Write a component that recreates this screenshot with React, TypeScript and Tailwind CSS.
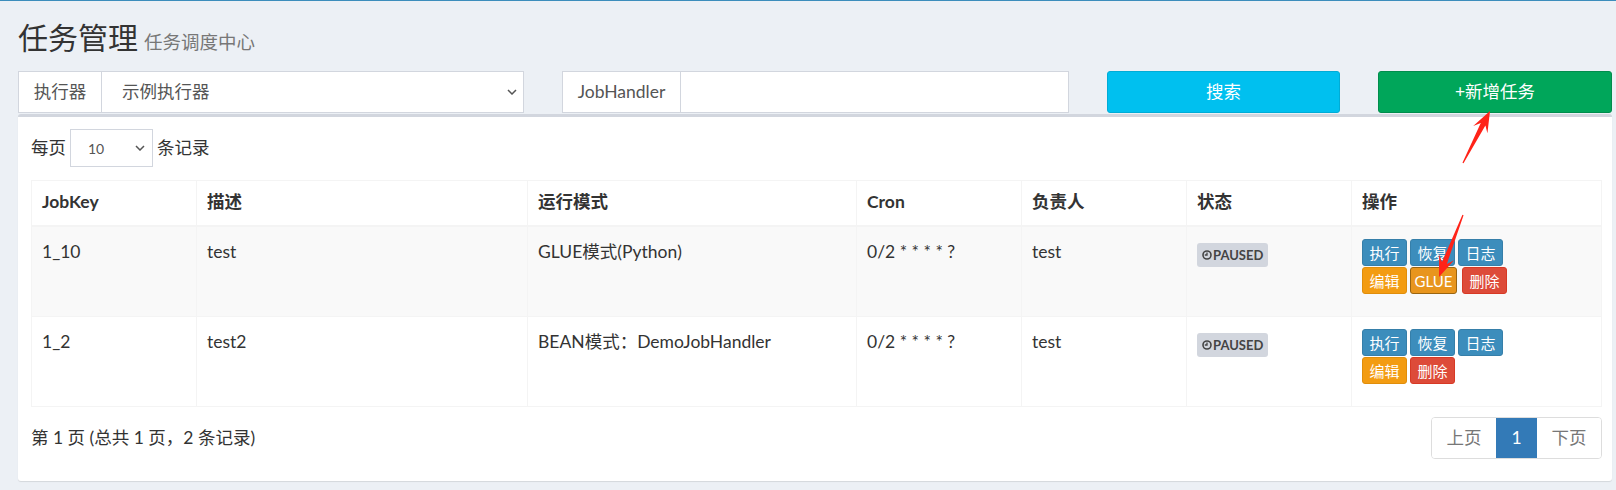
import React from "react";

interface Job {
	key: string;
	desc: string;
	mode: string;
	cron: string;
	owner: string;
	glue: boolean;
}

const jobs: Job[] = [
	{ key: "1_10", desc: "test", mode: "GLUE模式(Python)", cron: "0/2 * * * * ?", owner: "test", glue: true },
	{ key: "1_2", desc: "test2", mode: "BEAN模式：DemoJobHandler", cron: "0/2 * * * * ?", owner: "test", glue: false },
];

const headers = ["JobKey", "描述", "运行模式", "Cron", "负责人", "状态", "操作"];
const cols = "grid grid-cols-[165px_331px_329px_165px_165px_165px_250px]";

function Chevron({ className }: { className?: string }) {
	return (
		<svg className={className} width="10" height="6" viewBox="0 0 10 6" fill="none">
			<polyline points="1,1 5,5 9,1" stroke="#555" strokeWidth="1.5" />
		</svg>
	);
}

function ClockIcon() {
	return (
		<svg width="10" height="10" viewBox="0 0 10 10" fill="none" className="mr-[1px]">
			<circle cx="5" cy="5" r="4" stroke="#444" strokeWidth="1.6" />
			<path d="M5 2.6V5H2.8" stroke="#444" strokeWidth="1.3" />
		</svg>
	);
}

// red annotation arrow, tail -> tip
function arrowPoints(tx: number, ty: number, px: number, py: number) {
	const dx = px - tx;
	const dy = py - ty;
	const L = Math.hypot(dx, dy);
	const ux = dx / L;
	const uy = dy / L;
	const nx = -uy;
	const ny = ux;
	const pt = (a: number, b: number) => `${tx + ux * a + nx * b},${ty + uy * a + ny * b}`;
	return [pt(0, 0.6), pt(L - 15, 2.6), pt(L - 21, 8), pt(L, 0), pt(L - 21, -8), pt(L - 15, -2.6), pt(0, -0.6)].join(" ");
}

function Btn({ label, tone, w = "w-[45px]" }: { label: string; tone: "primary" | "warning" | "glue" | "danger"; w?: string }) {
	const tones = {
		primary: "bg-[#3c8dbc] border-[#367fa9]",
		warning: "bg-[#f39c12] border-[#e08e0b]",
		glue: "bg-[#e8951d] border-[#9a6510]",
		danger: "bg-[#dd4b39] border-[#d73925]",
	};
	return (
		<span className={`${w} h-[27px] inline-flex items-center justify-center rounded-[3px] border text-white text-[15px] leading-[22px] ${tones[tone]}`}>
			{label}
		</span>
	);
}

export default function App() {
	return (
		<div className="relative w-[1616px] h-[490px] overflow-hidden bg-[#ecf0f5] text-[#333] font-['Lato','Noto_Sans_CJK_SC',sans-serif]">
			<div className="h-px bg-[#3c8dbc]" />
			<div className="pl-[18px] pr-[4px]">
				{/* header */}
				<div className="flex items-baseline h-[51px] pt-[21px]">
					<h1 className="text-[30px] leading-[30px] text-[#333]">任务管理</h1>
					<span className="ml-[6px] text-[18.5px] leading-none text-[#777]">任务调度中心</span>
				</div>

				{/* search row */}
				<div className="mt-[19px] grid grid-cols-[506px_507px_233px_234px] gap-x-[38px] h-[42px] text-[17.5px]">
					<div className="flex border border-[#d2d6de] bg-white text-[#555]">
						<div className="w-[83px] border-r border-[#d2d6de] flex items-center justify-center">执行器</div>
						<div className="flex-1 flex items-center justify-between pl-[20px] pr-[6px]">
							<span>示例执行器</span>
							<Chevron />
						</div>
					</div>
					<div className="flex border border-[#d2d6de] bg-white text-[#555]">
						<div className="w-[118px] border-r border-[#d2d6de] flex items-center justify-center">JobHandler</div>
						<div className="flex-1" />
					</div>
					<button type="button" className="rounded-[3px] border border-[#00acd6] bg-[#00c0ef] text-white">
						搜索
					</button>
					<button type="button" className="rounded-[3px] border border-[#008d4c] bg-[#00a65a] text-white">
						+新增任务
					</button>
				</div>

				{/* box */}
				<div className="mt-[1px] h-[367px] rounded-[3px] border-t-[3px] border-[#d2d6de] bg-white shadow-[0_1px_1px_rgba(0,0,0,0.1)] pt-[12px] pl-[13px] pr-[10px]">
					<div className="flex items-center h-[38px] text-[17.5px]">
						<span>每页</span>
						<div className="ml-[4px] w-[83px] h-[38px] border border-[#d2d6de] flex items-center justify-between pl-[17px] pr-[7px] text-[14px] text-[#555]">
							<span>10</span>
							<Chevron />
						</div>
						<span className="ml-[4px]">条记录</span>
					</div>

					<div className="mt-[13px] border-l border-t border-[#f4f4f4] text-[17.5px] leading-[25px]">
						<div className={cols}>
							{headers.map((h) => (
								<div key={h} className="h-[46px] border-r border-b-2 border-[#f4f4f4] px-[10px] pb-[3px] flex items-center font-bold">
									{h}
								</div>
							))}
						</div>
						{jobs.map((job, i) => (
							<div key={job.key} className={`${cols} ${i === 0 ? "bg-[#f9f9f9]" : "bg-white"}`}>
								{[job.key, job.desc, job.mode, job.cron, job.owner].map((v, j) => (
									<div key={j} className="h-[90px] border-r border-b border-[#f4f4f4] px-[10px] pt-[12px]">
										{v}
									</div>
								))}
								<div className="h-[90px] border-r border-b border-[#f4f4f4] px-[10px] pt-[14px]">
									<span className="inline-flex items-center h-[24px] px-[5px] rounded-[3px] bg-[#d2d6de] text-[#444] text-[13px] font-bold leading-none">
										<ClockIcon />
										PAUSED
									</span>
								</div>
								<div className="h-[90px] border-r border-b border-[#f4f4f4] px-[10px] pt-[12px]">
									<div className="flex gap-[3px]">
										<Btn label="执行" tone="primary" />
										<Btn label="恢复" tone="primary" />
										<Btn label="日志" tone="primary" />
									</div>
									<div className="mt-[1px] flex gap-[3px]">
										<Btn label="编辑" tone="warning" />
										{job.glue && (
											<span className="mr-[2px]">
												<Btn label="GLUE" tone="glue" w="w-[47px]" />
											</span>
										)}
										<Btn label="删除" tone="danger" />
									</div>
								</div>
							</div>
						))}
					</div>

					<div className="mt-[10px] flex items-center justify-between h-[42px] text-[17.5px]">
						<span>第 1 页 (总共 1 页，2 条记录)</span>
						<div className="flex h-[42px] rounded-[4px] border border-[#ddd] overflow-hidden">
							<span className="w-[64px] flex items-center justify-center text-[#777] bg-white">上页</span>
							<span className="w-[41px] flex items-center justify-center text-white bg-[#337ab7]">1</span>
							<span className="w-[64px] flex items-center justify-center text-[#777] bg-white">下页</span>
						</div>
					</div>
				</div>
			</div>

			<svg className="absolute inset-0 pointer-events-none" width="1616" height="490">
				<polygon points={arrowPoints(1463, 163, 1490, 111)} fill="#ff2318" />
				<polygon points={arrowPoints(1463, 215, 1439, 277)} fill="#ff2318" />
			</svg>
		</div>
	);
}
